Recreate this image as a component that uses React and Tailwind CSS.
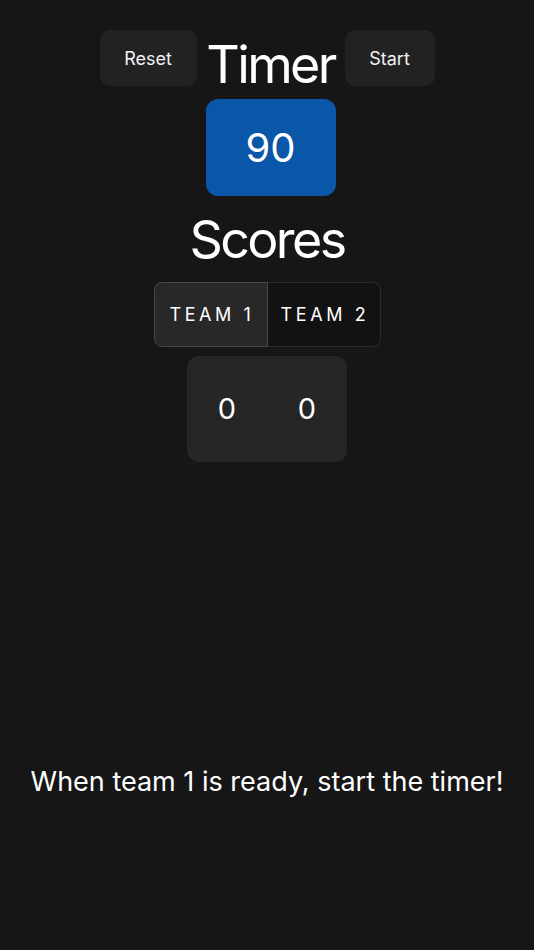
export default function App() {
  const font = { fontFamily: 'Inter, "Noto Sans", sans-serif' };
  return (
    <div className="min-h-[950px] w-full bg-[#161616] text-white flex flex-col items-center" style={font}>
      <div className="flex items-start gap-[9px] mt-[30px]">
        <button className="h-[56px] w-[97px] rounded-[10px] bg-[#222222] text-[18px] text-[#f2f2f2]">Reset</button>
        <div className="flex flex-col items-center w-[130px]">
          <h1 className="mt-[9px] text-[52px] leading-none tracking-[-0.05em] font-normal">Timer</h1>
          <div className="mt-[8px] h-[97px] w-[130px] rounded-[12px] bg-[#0a56a8] flex items-center justify-center text-[40px]">90</div>
        </div>
        <button className="h-[56px] w-[90px] rounded-[10px] bg-[#222222] text-[18px] text-[#f2f2f2]">Start</button>
      </div>
      <h2 className="mt-[18px] text-[52px] leading-none tracking-[-0.05em] font-normal">Scores</h2>
      <div className="mt-[16px] flex h-[65px] w-[227px]">
        <div className="flex-1 flex items-center justify-center rounded-l-[8px] border border-[#474747] bg-[#282828] text-[18px] tracking-[0.2em] pl-[3px]">TEAM 1</div>
        <div className="flex-1 flex items-center justify-center rounded-r-[8px] border border-l-0 border-[#2b2b2b] bg-[#121212] text-[18px] tracking-[0.2em] pl-[3px]">TEAM 2</div>
      </div>
      <div className="mt-[9px] flex h-[106px] w-[160px] rounded-[12px] bg-[#262626]">
        <div className="w-1/2 flex items-center justify-center text-[29px]">0</div>
        <div className="w-1/2 flex items-center justify-center text-[29px]">0</div>
      </div>
      <p className="mt-[306px] text-[27px] leading-none">When team 1 is ready, start the timer!</p>
    </div>
  );
}
